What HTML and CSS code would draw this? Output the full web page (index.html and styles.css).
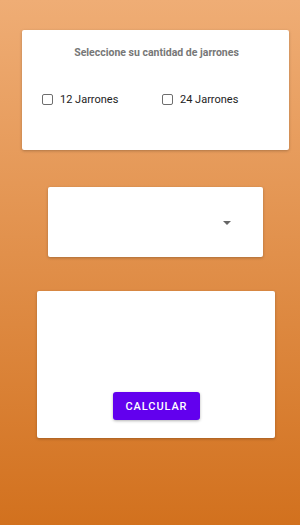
FILE: index.html
```html
<!DOCTYPE html>
<html lang="es">
<head>
  <meta charset="UTF-8" />
  <meta name="viewport" content="width=device-width, initial-scale=1.0"/>
  <title>Jarrones</title>
  <link rel="stylesheet" href="styles.css">
</head>
<body>
  <div class="pantalla">
    <div class="card card-cantidad">
      <div class="titulo">Seleccione su cantidad de jarrones</div>
      <div class="opciones">
        <label class="opcion"><span class="check"></span>12 Jarrones</label>
        <label class="opcion"><span class="check"></span>24 Jarrones</label>
      </div>
    </div>

    <div class="card card-select">
      <span class="flecha"></span>
    </div>

    <div class="card card-calcular">
      <button class="btn-calcular">CALCULAR</button>
    </div>
  </div>
</body>
</html>
```

FILE: styles.css
```css
html, body {
  margin: 0;
  padding: 0;
}
body {
  font-family: Roboto, "Liberation Sans", sans-serif;
  width: 300px;
  height: 525px;
  background: linear-gradient(#efad75, #d2711e);
  overflow: hidden;
}
.pantalla {
  display: flex;
  flex-direction: column;
  padding-top: 30px;
}
.card {
  background: white;
  border-radius: 2px;
  box-shadow: 0 1px 3px rgba(0,0,0,0.25);
  box-sizing: border-box;
}
.card-cantidad {
  width: 267px;
  height: 120px;
  margin-left: 22px;
  padding-top: 16px;
}
.titulo {
  text-align: center;
  font-size: 10.5px;
  font-weight: bold;
  color: #777;
  padding-left: 2px;
}
.opciones {
  display: flex;
  margin-top: 34px;
  padding-left: 20px;
}
.opcion {
  display: flex;
  align-items: center;
  font-size: 11px;
  color: #222;
  width: 120px;
}
.check {
  width: 9px;
  height: 9px;
  border: 1.7px solid #6e6e6e;
  border-radius: 2px;
  margin-right: 7px;
}
.card-select {
  width: 215px;
  height: 70px;
  margin-left: 48px;
  margin-top: 37px;
  display: flex;
  align-items: center;
  justify-content: flex-end;
  padding-right: 32px;
}
.flecha {
  width: 0;
  height: 0;
  border-left: 4px solid transparent;
  border-right: 4px solid transparent;
  border-top: 4px solid #666;
  margin-top: 1px;
}
.card-calcular {
  width: 238px;
  height: 147px;
  margin-left: 37px;
  margin-top: 34px;
  display: flex;
  justify-content: center;
  align-items: flex-end;
  padding-bottom: 18px;
  padding-left: 1px;
}
.btn-calcular {
  width: 87px;
  height: 28px;
  background: #6200ee;
  color: white;
  border: none;
  border-radius: 3px;
  font-family: Roboto, "Liberation Sans", sans-serif;
  font-size: 11px;
  font-weight: 500;
  letter-spacing: 0.9px;
  box-shadow: 0 1px 3px rgba(0,0,0,0.3);
  padding: 0;
}
```
